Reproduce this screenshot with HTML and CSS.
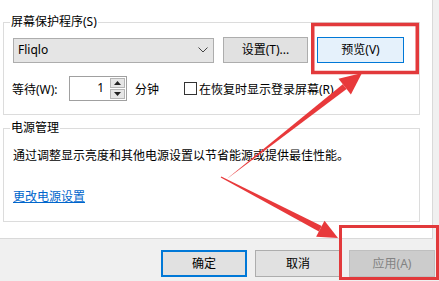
FILE: index.html
```html
<!DOCTYPE html>
<html lang="zh-CN">
<head>
<meta charset="utf-8">
<title>屏幕保护程序设置</title>
<link rel="stylesheet" href="styles.css">
</head>
<body>
<div class="dialog">
  <div class="page">
    <fieldset class="group group-saver">
      <legend class="legend">屏幕保护程序(S)</legend>
      <div class="row row-select">
        <div class="combo">
          <span class="combo-text">Fliqlo</span>
          <svg class="chevron" width="10" height="6" viewBox="0 0 10 6"><polyline points="0.5,0.5 5,5 9.5,0.5" fill="none" stroke="#444" stroke-width="1"/></svg>
        </div>
        <button class="btn btn-settings">设置(T)...</button>
        <button class="btn btn-preview">预览(V)</button>
      </div>
      <div class="row row-wait">
        <span class="label-wait">等待(W):</span>
        <div class="spin">
          <span class="spin-value">1</span>
          <div class="spin-buttons">
            <div class="spin-btn"><svg width="7" height="4" viewBox="0 0 7 4"><polygon points="3.5,0 7,4 0,4" fill="#222"/></svg></div>
            <div class="spin-btn"><svg width="7" height="4" viewBox="0 0 7 4"><polygon points="0,0 7,0 3.5,4" fill="#222"/></svg></div>
          </div>
        </div>
        <span class="label-min">分钟</span>
        <span class="checkbox"></span>
        <span class="label-check">在恢复时显示登录屏幕(R)</span>
      </div>
    </fieldset>
    <fieldset class="group group-power">
      <legend class="legend">电源管理</legend>
      <p class="power-text">通过调整显示亮度和其他电源设置以节省能源或提供最佳性能。</p>
      <a class="power-link" href="#">更改电源设置</a>
    </fieldset>
  </div>
  <div class="footer">
    <button class="btn btn-foot btn-ok">确定</button>
    <button class="btn btn-foot">取消</button>
    <button class="btn btn-foot btn-disabled">应用(A)</button>
  </div>
  <svg class="annot" width="439" height="281" viewBox="0 0 439 281">
    <rect x="312.75" y="24.5" width="104.5" height="48" fill="none" stroke="#e2393b" stroke-width="3.5"/>
    <rect x="340.5" y="226.5" width="97" height="52" fill="none" stroke="#e2393b" stroke-width="3"/>
    <polygon points="227.5,178.6 228.5,177.4 342.8,84.2 346.6,89.0" fill="#e8393b"/>
    <polygon points="362,73 338.5,78.7 350.9,94.5" fill="#e8393b"/>
    <polygon points="220.7,177.5 221.3,176.5 321.7,226.1 318.9,231.5" fill="#e8393b"/>
    <polygon points="338,238 324.5,220.8 316.1,236.8" fill="#e8393b"/>
  </svg>
</div>
</body>
</html>
```
FILE: styles.css
```css
* { box-sizing: border-box; }
html, body { margin: 0; padding: 0; }
body {
  width: 439px;
  height: 281px;
  overflow: hidden;
  background: #f0f0f0;
  font-family: "Noto Sans", "Noto Sans CJK SC", sans-serif;
  font-size: 12px;
  color: #000;
}
.dialog {
  position: relative;
  width: 439px;
  height: 281px;
}
.page {
  width: 433px;
  height: 239px;
  background: #fff;
  border-right: 1px solid #d9d9d9;
  border-bottom: 1px solid #d9d9d9;
  padding: 14px 0 0 3px;
  display: flex;
  flex-direction: column;
}
.group {
  margin: 0;
  padding: 0;
  width: 417px;
  border: 1px solid #dcdcdc;
  min-width: 0;
}
.legend {
  margin-left: 6px;
  padding: 0 1px;
  line-height: 16px;
  height: 16px;
  font-size: 12px;
}
.group-saver { height: 101px; }
.group-power {
  height: 102px;
  margin-top: 5px;
  display: flex;
  flex-direction: column;
  align-items: flex-start;
}
.row {
  display: flex;
  align-items: center;
}
.row-select {
  margin-top: 7px;
  padding-left: 9px;
  height: 26px;
}
.combo {
  width: 201px;
  height: 25px;
  background: #e5e5e5;
  border: 1px solid #adadad;
  display: flex;
  align-items: center;
  justify-content: space-between;
  padding: 0 5px 0 4px;
}
.combo-text { line-height: 16px; }
.chevron { display: block; }
.btn {
  font-family: inherit;
  font-size: 12px;
  color: #000;
  background: #e1e1e1;
  border: 1px solid #adadad;
  margin: 0;
  padding: 0;
  line-height: 16px;
}
.btn-settings {
  width: 85px;
  height: 26px;
  margin-left: 9px;
}
.btn-preview {
  width: 87px;
  height: 26px;
  margin-left: 9px;
  background: #e5f1fb;
  border-color: #0078d7;
}
.row-wait {
  margin-top: 13px;
  height: 25px;
  padding-left: 8px;
}
.label-wait { width: 57px; }
.spin {
  width: 58px;
  height: 25px;
  border: 1px solid #a0a0a0;
  display: flex;
  align-items: stretch;
}
.spin-value {
  flex: 1;
  text-align: right;
  padding-right: 6px;
  line-height: 22px;
}
.spin-buttons {
  width: 16px;
  display: flex;
  flex-direction: column;
  gap: 1px;
  padding: 1px 1px 1px 0;
}
.spin-btn {
  flex: 1;
  background: #e6e6e6;
  border: 1px solid #b5b5b5;
  display: flex;
  align-items: center;
  justify-content: center;
}
.spin-btn svg { display: block; }
.label-min { margin-left: 8px; width: 49px; }
.checkbox {
  width: 13px;
  height: 13px;
  border: 1px solid #333;
  background: #fff;
}
.label-check { margin-left: 2px; }
.power-text {
  margin: 12px 0 0 9px;
  line-height: 16px;
}
.power-link {
  display: inline-block;
  margin: 25px 0 0 9px;
  line-height: 16px;
  color: #0066cc;
  text-decoration: underline;
}
.footer {
  display: flex;
  justify-content: flex-end;
  gap: 8px;
  padding: 11px 4px 0 0;
}
.btn-foot {
  width: 86px;
  height: 27px;
}
.btn-ok {
  border: 2px solid #0078d7;
}
.btn-disabled {
  background: #cccccc;
  border-color: #bfbfbf;
  color: #838383;
}
.annot {
  position: absolute;
  left: 0;
  top: 0;
  pointer-events: none;
}
```
